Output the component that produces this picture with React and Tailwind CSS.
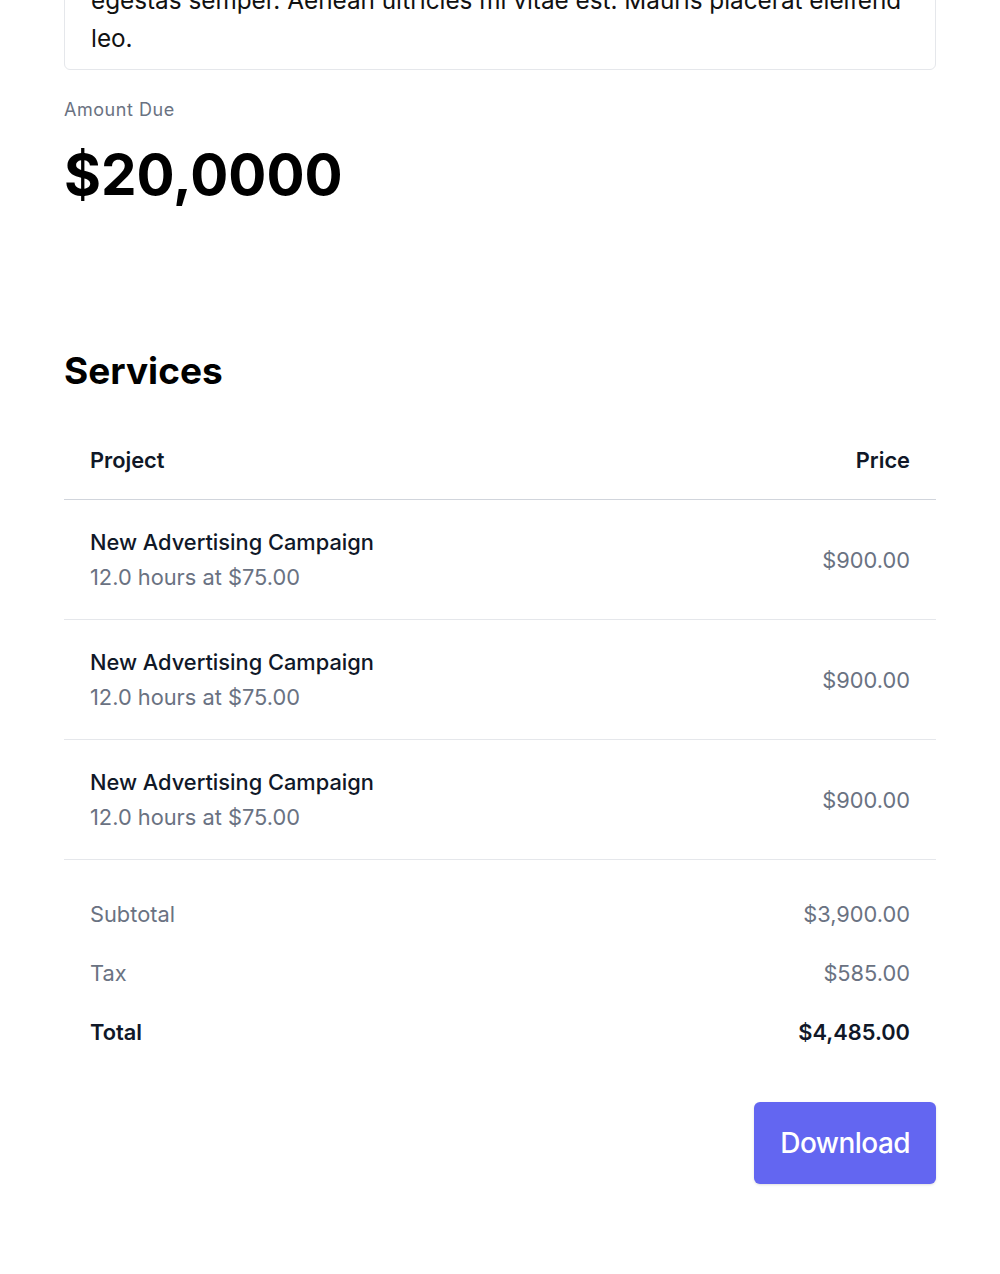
import React from "react";

const rows = [1, 2, 3];

export default function App() {
  return (
    <div
      className="h-[1274px] overflow-hidden bg-white px-16 text-[#111827]"
      style={{ fontFamily: "Inter, 'Noto Sans', sans-serif" }}
    >
      {/* Notes card, scrolled partly out of view */}
      <div className="mt-[-82px] rounded-[6px] border border-gray-200 px-[26px] pb-[12px] pt-6 text-[24.3px] leading-[38px] text-[#111]">
        <span className="block whitespace-nowrap">
          Pellentesque habitant morbi tristique senectus et netus et malesuada
        </span>
        <span className="block whitespace-nowrap">
          egestas semper. Aenean ultricies mi vitae est. Mauris placerat eleifend
        </span>
        <span className="block whitespace-nowrap">leo.</span>
      </div>

      <p className="mt-[26px] text-[18px] leading-[28px] tracking-[0.03em] text-gray-500">Amount Due</p>
      <p className="mt-[22px] text-[56.5px] font-bold leading-[57px] text-black">$20,0000</p>

      <h2 className="mt-[146px] text-[37px] font-bold leading-[44px] text-black">Services</h2>

      <div className="mt-[29px]">
        <div className="flex justify-between border-b border-gray-300 px-[26px] pb-[23px] pt-[22px] text-[21.8px] font-semibold leading-[32px] text-gray-900">
          <span>Project</span>
          <span>Price</span>
        </div>

        {rows.map((r) => (
          <div
            key={r}
            className="flex items-center justify-between border-b border-gray-200 px-[26px] pb-[24px] pt-[25px] text-[21.8px] leading-[35px]"
          >
            <div>
              <p className="font-medium text-gray-900">New Advertising Campaign</p>
              <p className="text-gray-500">12.0 hours at $75.00</p>
            </div>
            <span className="text-gray-500">$900.00</span>
          </div>
        ))}

        <div className="pt-[25px] text-[21.8px] leading-[35px]">
          <div className="flex justify-between px-[26px] py-[12px] text-gray-500">
            <span>Subtotal</span>
            <span>$3,900.00</span>
          </div>
          <div className="flex justify-between px-[26px] py-[12px] text-gray-500">
            <span>Tax</span>
            <span>$585.00</span>
          </div>
          <div className="flex justify-between px-[26px] py-[12px] font-semibold text-gray-900">
            <span>Total</span>
            <span>$4,485.00</span>
          </div>
        </div>
      </div>

      <div className="mt-[40px] flex justify-end">
        <button className="rounded-[6px] bg-[#6366f1] px-[26px] py-[21px] text-[28px] font-medium leading-[40px] tracking-[-0.02em] text-white shadow-sm">
          Download
        </button>
      </div>
    </div>
  );
}
